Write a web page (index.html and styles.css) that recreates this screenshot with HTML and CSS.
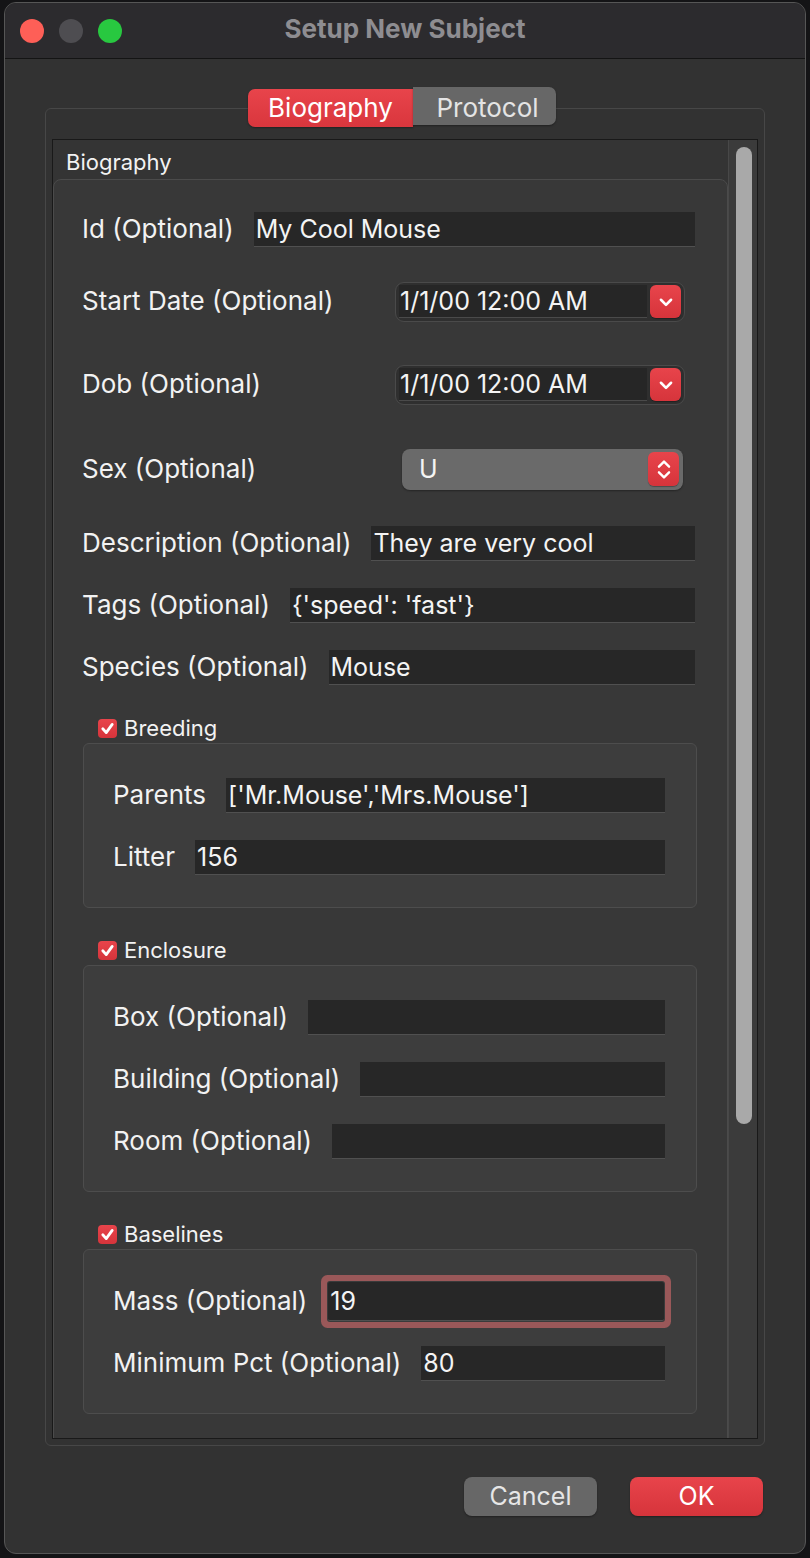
FILE: index.html
```html
<!DOCTYPE html>
<html>
<head>
<meta charset="utf-8">
<title>Setup New Subject</title>
<link rel="stylesheet" href="styles.css">
</head>
<body>
<div class="window">
  <div class="titlebar">
    <div class="lights">
      <span class="light red"></span>
      <span class="light grey"></span>
      <span class="light green"></span>
    </div>
    <div class="title">Setup New Subject</div>
    <div></div>
  </div>
  <div class="dialog">
    <div class="tabs">
      <div class="tab active">Biography</div>
      <div class="tab">Protocol</div>
    </div>
    <div class="pane">
      <div class="scroll">
        <div class="scroll-content">
          <div class="group-title">Biography</div>
          <div class="group">
            <div class="row">
              <span class="label">Id (Optional)</span>
              <div class="field">My Cool Mouse</div>
            </div>
            <div class="row tall">
              <span class="label">Start Date (Optional)</span>
              <div class="date">
                <div class="date-text">1/1/00 12:00 AM</div>
                <div class="drop"><svg viewBox="0 0 16 16" width="18" height="18"><path d="M3.5 6 L8 10.5 L12.5 6" fill="none" stroke="#fff" stroke-width="2.3" stroke-linecap="round" stroke-linejoin="round"/></svg></div>
              </div>
            </div>
            <div class="row tall">
              <span class="label">Dob (Optional)</span>
              <div class="date">
                <div class="date-text">1/1/00 12:00 AM</div>
                <div class="drop"><svg viewBox="0 0 16 16" width="18" height="18"><path d="M3.5 6 L8 10.5 L12.5 6" fill="none" stroke="#fff" stroke-width="2.3" stroke-linecap="round" stroke-linejoin="round"/></svg></div>
              </div>
            </div>
            <div class="row sex">
              <span class="label">Sex (Optional)</span>
              <div class="combo">
                <span class="combo-text">U</span>
                <div class="drop updown"><svg viewBox="0 0 16 24" width="18" height="27"><path d="M3.5 9.5 L8 5 L12.5 9.5 M3.5 14.5 L8 19 L12.5 14.5" fill="none" stroke="#fff" stroke-width="2.1" stroke-linecap="round" stroke-linejoin="round"/></svg></div>
              </div>
            </div>
            <div class="row">
              <span class="label">Description (Optional)</span>
              <div class="field">They are very cool</div>
            </div>
            <div class="row">
              <span class="label">Tags (Optional)</span>
              <div class="field">{'speed': 'fast'}</div>
            </div>
            <div class="row">
              <span class="label">Species (Optional)</span>
              <div class="field">Mouse</div>
            </div>

            <div class="section first">
              <div class="check-title"><span class="checkbox"><svg viewBox="0 0 19 19" width="19" height="19"><path d="M4.8 9.8 L8.2 13.6 L14.2 5.4" fill="none" stroke="#fff" stroke-width="2.8" stroke-linecap="round" stroke-linejoin="round"/></svg></span>Breeding</div>
              <div class="frame">
                <div class="row">
                  <span class="label">Parents</span>
                  <div class="field">['Mr.Mouse','Mrs.Mouse']</div>
                </div>
                <div class="row">
                  <span class="label">Litter</span>
                  <div class="field">156</div>
                </div>
              </div>
            </div>

            <div class="section">
              <div class="check-title"><span class="checkbox"><svg viewBox="0 0 19 19" width="19" height="19"><path d="M4.8 9.8 L8.2 13.6 L14.2 5.4" fill="none" stroke="#fff" stroke-width="2.8" stroke-linecap="round" stroke-linejoin="round"/></svg></span>Enclosure</div>
              <div class="frame">
                <div class="row">
                  <span class="label">Box (Optional)</span>
                  <div class="field"></div>
                </div>
                <div class="row">
                  <span class="label">Building (Optional)</span>
                  <div class="field"></div>
                </div>
                <div class="row">
                  <span class="label">Room (Optional)</span>
                  <div class="field"></div>
                </div>
              </div>
            </div>

            <div class="section">
              <div class="check-title"><span class="checkbox"><svg viewBox="0 0 19 19" width="19" height="19"><path d="M4.8 9.8 L8.2 13.6 L14.2 5.4" fill="none" stroke="#fff" stroke-width="2.8" stroke-linecap="round" stroke-linejoin="round"/></svg></span>Baselines</div>
              <div class="frame">
                <div class="row">
                  <span class="label">Mass (Optional)</span>
                  <div class="field focused">19</div>
                </div>
                <div class="row">
                  <span class="label">Minimum Pct (Optional)</span>
                  <div class="field">80</div>
                </div>
              </div>
            </div>
            <div class="group-tail"></div>
          </div>
        </div>
        <div class="scrollbar"><div class="thumb"></div></div>
      </div>
    </div>
    <div class="buttons">
      <div class="btn cancel">Cancel</div>
      <div class="btn ok">OK</div>
    </div>
  </div>
</div>
</body>
</html>
```
FILE: styles.css
```css
* { box-sizing: border-box; }
html, body { margin: 0; padding: 0; }
body {
  background: #141416;
  font-family: Inter, "Noto Sans", "Liberation Sans", sans-serif;
  color: #f0f0f0;
  width: 810px;
  height: 1558px;
  overflow: hidden;
}
.window {
  margin: 2px 0 0 4px;
  width: 802px;
  height: 1552px;
  border: 1px solid #565656;
  border-radius: 12px;
  background: #323232;
  overflow: hidden;
  display: flex;
  flex-direction: column;
}
.titlebar {
  height: 56px;
  flex: none;
  background: #2c2b2e;
  border-bottom: 1px solid #141414;
  display: grid;
  grid-template-columns: 1fr auto 1fr;
  align-items: center;
}
.lights { display: flex; gap: 15px; padding-left: 15px; }
.light { width: 24px; height: 24px; border-radius: 50%; display: block; }
.light.red { background: #fe5f57; }
.light.grey { background: #4e4d51; }
.light.green { background: #28c840; }
.title {
  font-weight: 700;
  font-size: 26px;
  color: #8e8d91;
  margin-top: -4px;
}
.dialog {
  flex: 1;
  padding: 29px 40px 0 40px;
  display: flex;
  flex-direction: column;
}
.tabs {
  display: flex;
  justify-content: center;
  margin-bottom: -19px;
  position: relative;
  z-index: 2;
  padding-right: 6px;
}
.tab {
  height: 38px;
  font-size: 26px;
  line-height: 38px;
  text-align: center;
  background: #676767;
  color: #e4e4e4;
  box-shadow: 0 1px 2px rgba(0,0,0,0.35);
}
.tab.active {
  width: 165px;
  background: linear-gradient(#e8444b, #d9363d);
  color: #ffffff;
  border-radius: 7px 0 0 7px;
  margin-top: 1px;
}
.tab:not(.active) {
  width: 143px;
  border-radius: 0 7px 7px 0;
  margin-top: -1px;
  padding-top: 2px;
  padding-left: 6px;
}
.pane {
  height: 1338px;
  border: 1px solid #474747;
  border-radius: 6px;
  padding: 30px 6px 6px 6px;
}
.scroll {
  height: 1300px;
  border: 1px solid #191919;
  display: flex;
  overflow: hidden;
  background: #343434;
}
.scroll-content {
  flex: 1;
  overflow: hidden;
}
.group-title {
  height: 39px;
  font-size: 22px;
  line-height: 44px;
  padding-left: 13px;
  color: #f2f2f2;
}
.group {
  border: 1px solid #4b4b4b;
  border-radius: 8px;
  background: #383838;
  padding: 18px 32px 0 28px;
}
.row {
  display: flex;
  align-items: center;
  height: 62px;
}
.row.tall { height: 83px; }
.row.sex { height: 86px; }
.label {
  font-size: 26px;
  white-space: nowrap;
  color: #f2f2f2;
  margin-top: -2px;
}
.field {
  flex: 1;
  margin-left: 20px;
  height: 35px;
  background: #272727;
  border-bottom: 1px solid #505050;
  font-size: 25px;
  line-height: 35px;
  padding-left: 2px;
  color: #f4f4f4;
  white-space: nowrap;
  overflow: hidden;
}
.field.focused {
  height: 39px;
  line-height: 39px;
  box-shadow: 0 0 0 1px #3a3a3a, 0 0 0 7px #9a5859;
  border-radius: 2px;
  margin-left: 21px;
  margin-right: 1px;
}
.date {
  margin-left: auto;
  margin-right: 10px;
  width: 290px;
  height: 40px;
  border: 1px solid #4a4a4a;
  border-radius: 9px;
  background: #2f2f2f;
  display: flex;
  align-items: center;
  padding: 2px 3px 2px 3px;
}
.date-text {
  flex: 1;
  height: 33px;
  background: #262626;
  border-bottom: 1px solid #4a4a4a;
  font-size: 25px;
  line-height: 33px;
  padding-left: 1px;
  margin-right: 3px;
  color: #f4f4f4;
  white-space: nowrap;
  overflow: hidden;
}
.drop {
  width: 31px;
  height: 33px;
  flex: none;
  border-radius: 6px;
  background: linear-gradient(#e8444b, #d6343b);
  display: flex;
  align-items: center;
  justify-content: center;
  box-shadow: 0 1px 1px rgba(0,0,0,0.3);
}
.combo {
  margin-left: auto;
  margin-right: 12px;
  width: 281px;
  height: 41px;
  border-radius: 8px;
  background: #6a6a6a;
  display: flex;
  align-items: center;
  padding: 0 4px 0 17px;
  box-shadow: 0 1px 2px rgba(0,0,0,0.35);
}
.combo-text {
  flex: 1;
  font-size: 25px;
  color: #f4f4f4;
}
.drop.updown { height: 34px; }
.section { margin-top: 27px; }
.section.first { margin-top: 15px; }
.check-title {
  height: 30px;
  display: flex;
  align-items: center;
  padding-left: 16px;
  font-size: 22px;
  color: #f2f2f2;
}
.checkbox {
  width: 19px;
  height: 19px;
  border-radius: 4px;
  background: linear-gradient(#e8444b, #d6343b);
  margin-right: 7px;
  display: flex;
}
.frame {
  margin: 0 -2px 0 1px;
  border: 1px solid #4d4d4d;
  border-radius: 6px;
  background: #3d3d3d;
  padding: 20px 31px 19px 29px;
}
.group-tail { height: 60px; }
.scrollbar {
  width: 29px;
  flex: none;
  background: #3b3b3b;
  border-left: 1px solid #484848;
  padding: 7px 0 0 7px;
}
.thumb {
  width: 16px;
  height: 977px;
  border-radius: 8px;
  background: #a9a9a9;
}
.buttons {
  display: flex;
  justify-content: flex-end;
  gap: 33px;
  margin-top: 31px;
  padding-right: 2px;
}
.btn {
  width: 133px;
  height: 39px;
  border-radius: 8px;
  font-size: 25px;
  line-height: 39px;
  text-align: center;
  box-shadow: 0 1px 2px rgba(0,0,0,0.35);
}
.btn.cancel { background: #676767; color: #e6e6e6; }
.btn.ok { background: linear-gradient(#e8444b, #d6343b); color: #ffffff; }
```
